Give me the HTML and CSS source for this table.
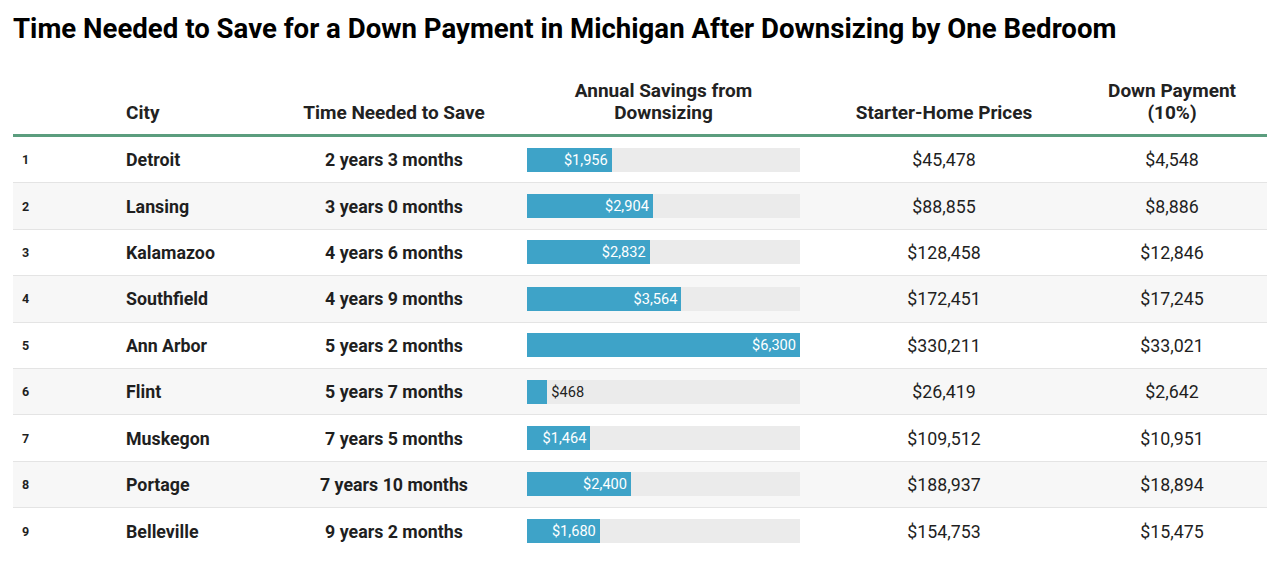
FILE: index.html
```html
<!DOCTYPE html>
<html>
<head>
<meta charset="utf-8">
<link rel="stylesheet" href="styles.css">
</head>
<body>
<div class="page">
  <h1 class="title">Time Needed to Save for a Down Payment in Michigan After Downsizing by One Bedroom</h1>
  <div class="table">
    <div class="row head">
      <div class="c rank"></div>
      <div class="c city">City</div>
      <div class="c time">Time Needed to Save</div>
      <div class="c bar">Annual Savings from<br>Downsizing</div>
      <div class="c price">Starter-Home Prices</div>
      <div class="c down">Down Payment<br>(10%)</div>
    </div>
    <div class="row">
      <div class="c rank">1</div><div class="c city">Detroit</div><div class="c time">2 years 3 months</div>
      <div class="c bar"><div class="track"><div class="fill" style="width:31.05%"><span class="lbl in">$1,956</span></div></div></div>
      <div class="c price">$45,478</div><div class="c down">$4,548</div>
    </div>
    <div class="row alt">
      <div class="c rank">2</div><div class="c city">Lansing</div><div class="c time">3 years 0 months</div>
      <div class="c bar"><div class="track"><div class="fill" style="width:46.1%"><span class="lbl in">$2,904</span></div></div></div>
      <div class="c price">$88,855</div><div class="c down">$8,886</div>
    </div>
    <div class="row">
      <div class="c rank">3</div><div class="c city">Kalamazoo</div><div class="c time">4 years 6 months</div>
      <div class="c bar"><div class="track"><div class="fill" style="width:44.95%"><span class="lbl in">$2,832</span></div></div></div>
      <div class="c price">$128,458</div><div class="c down">$12,846</div>
    </div>
    <div class="row alt">
      <div class="c rank">4</div><div class="c city">Southfield</div><div class="c time">4 years 9 months</div>
      <div class="c bar"><div class="track"><div class="fill" style="width:56.57%"><span class="lbl in">$3,564</span></div></div></div>
      <div class="c price">$172,451</div><div class="c down">$17,245</div>
    </div>
    <div class="row">
      <div class="c rank">5</div><div class="c city">Ann Arbor</div><div class="c time">5 years 2 months</div>
      <div class="c bar"><div class="track"><div class="fill" style="width:100%"><span class="lbl in">$6,300</span></div></div></div>
      <div class="c price">$330,211</div><div class="c down">$33,021</div>
    </div>
    <div class="row alt">
      <div class="c rank">6</div><div class="c city">Flint</div><div class="c time">5 years 7 months</div>
      <div class="c bar"><div class="track"><div class="fill" style="width:7.43%"></div><span class="lbl out">$468</span></div></div>
      <div class="c price">$26,419</div><div class="c down">$2,642</div>
    </div>
    <div class="row">
      <div class="c rank">7</div><div class="c city">Muskegon</div><div class="c time">7 years 5 months</div>
      <div class="c bar"><div class="track"><div class="fill" style="width:23.24%"><span class="lbl in">$1,464</span></div></div></div>
      <div class="c price">$109,512</div><div class="c down">$10,951</div>
    </div>
    <div class="row alt">
      <div class="c rank">8</div><div class="c city">Portage</div><div class="c time">7 years 10 months</div>
      <div class="c bar"><div class="track"><div class="fill" style="width:38.1%"><span class="lbl in">$2,400</span></div></div></div>
      <div class="c price">$188,937</div><div class="c down">$18,894</div>
    </div>
    <div class="row last">
      <div class="c rank">9</div><div class="c city">Belleville</div><div class="c time">9 years 2 months</div>
      <div class="c bar"><div class="track"><div class="fill" style="width:26.67%"><span class="lbl in">$1,680</span></div></div></div>
      <div class="c price">$154,753</div><div class="c down">$15,475</div>
    </div>
  </div>
</div>
</body>
</html>
```
FILE: styles.css
```css
* { box-sizing: border-box; }
body {
  margin: 0;
  background: #fff;
  font-family: Roboto, "Liberation Sans", Arial, sans-serif;
  color: #1f1f1f;
}
.page {
  padding: 12px 13px 0 13px;
}
.title {
  margin: 0;
  font-size: 27.6px;
  line-height: 34px;
  font-weight: 700;
  color: #000;
}
.table {
  margin-top: 34px;
  width: 1254px;
}
.row {
  display: grid;
  grid-template-columns: 103px 174px 208px 331px 230px 208px;
  height: 46.4px;
  align-items: center;
  border-bottom: 1px solid #e4e4e4;
  font-size: 17.8px;
}
.row.alt { background: #f7f7f7; }
.row.last { border-bottom: none; }
.row.head {
  height: 57px;
  align-items: end;
  padding-bottom: 11px;
  border-bottom: 3px solid #5b9d7e;
  font-weight: 700;
  font-size: 19px;
  line-height: 22px;
  color: #222;
}
.c { text-align: center; }
.rank {
  text-align: left;
  padding-left: 9px;
  font-size: 12.5px;
  font-weight: 700;
}
.city {
  text-align: left;
  padding-left: 10px;
  font-weight: 700;
}
.time { font-weight: 700; }
.down { padding-left: 18px; }
.bar { display: flex; justify-content: center; }
.head.row .bar { display: block; }
.track {
  position: relative;
  width: 273px;
  height: 24px;
  background: #ebebeb;
  display: flex;
}
.fill {
  height: 100%;
  background: #3ea3c8;
  display: flex;
  align-items: center;
  justify-content: flex-end;
}
.lbl {
  font-size: 14.6px;
  white-space: nowrap;
  line-height: 24px;
}
.lbl.in { color: #fff; padding-right: 4px; }
.lbl.out { color: #222; padding-left: 4px; }
```
